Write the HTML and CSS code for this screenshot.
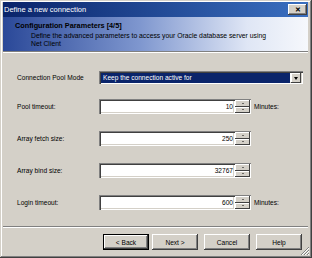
FILE: index.html
```html
<!DOCTYPE html>
<html lang="en">
<head>
  <meta charset="UTF-8">
  <title>Define a new connection</title>
  <link rel="stylesheet" href="styles.css">
</head>
<body>
  <div class="window">
    <div class="titlebar">
      <span class="title">Define a new connection</span>
      <span class="close">&#x2715;</span>
    </div>

    <div class="banner">
      <div class="banner-title">Configuration Parameters [4/5]</div>
      <div class="banner-desc">Define the advanced parameters to access your Oracle database server using<br>Net Client</div>
    </div>

    <div class="form">
      <div class="row row-mode">
        <label>Connection Pool Mode</label>
        <div class="combo">
          <span class="combo-value">Keep the connection active for</span>
          <span class="combo-btn"><span class="arrow-down"></span></span>
        </div>
      </div>

      <div class="row">
        <label>Pool timeout:</label>
        <div class="field">10</div>
        <div class="spinner"><span class="spin"><span class="arrow-up"></span></span><span class="spin"><span class="arrow-down small"></span></span></div>
        <span class="unit">Minutes:</span>
      </div>

      <div class="row">
        <label>Array fetch size:</label>
        <div class="field">250</div>
        <div class="spinner"><span class="spin"><span class="arrow-up"></span></span><span class="spin"><span class="arrow-down small"></span></span></div>
      </div>

      <div class="row">
        <label>Array bind size:</label>
        <div class="field">32767</div>
        <div class="spinner"><span class="spin"><span class="arrow-up"></span></span><span class="spin"><span class="arrow-down small"></span></span></div>
      </div>

      <div class="row">
        <label>Login timeout:</label>
        <div class="field">600</div>
        <div class="spinner"><span class="spin"><span class="arrow-up"></span></span><span class="spin"><span class="arrow-down small"></span></span></div>
        <span class="unit">Minutes:</span>
      </div>
    </div>

    <div class="footer">
      <button class="btn default">&lt; Back</button>
      <button class="btn next">Next &gt;</button>
      <button class="btn spaced">Cancel</button>
      <button class="btn spaced">Help</button>
    </div>

    <svg class="grip" width="10" height="10" viewBox="0 0 10 10">
      <path d="M9 1 L1 9 M9 4 L4 9 M9 7 L7 9" stroke="#808080" stroke-width="1"/>
      <path d="M9 2 L2 9 M9 5 L5 9 M9 8 L8 9" stroke="#ffffff" stroke-width="1"/>
    </svg>
  </div>
</body>
</html>
```

FILE: styles.css
```css
body {
  margin: 0;
  font-family: "Liberation Sans", Arial, sans-serif;
  font-size: 6.6px;
  color: #000;
  background: #d4d0c8;
}
.window {
  position: relative;
  width: 312px;
  height: 258px;
  box-sizing: border-box;
  padding: 2px 4px 2px 3px;
  background: #d4d0c8;
  box-shadow: inset -1px -1px #404040, inset 1px 1px #d4d0c8, inset -2px -2px #808080, inset 2px 2px #ffffff;
  display: flex;
  flex-direction: column;
}
.titlebar {
  height: 15px;
  display: flex;
  align-items: center;
  justify-content: space-between;
  background: linear-gradient(to right, #0a246a, #3a6fc0);
  color: #fff;
  padding-left: 1px;
  padding-right: 1px;
}
.title {
  font-size: 7.5px;
}
.close {
  width: 19px;
  height: 11px;
  background: #d4d0c8;
  color: #000;
  font-size: 7px;
  font-weight: bold;
  display: flex;
  align-items: center;
  justify-content: center;
  box-sizing: border-box;
  box-shadow: inset -1px -1px #404040, inset 1px 1px #ffffff, inset -2px -2px #808080;
}
.banner {
  height: 34px;
  border-bottom: 1px solid #808080;
  background: linear-gradient(to right, #2a4898 0%, #7f97cf 45%, #dfe6f5 80%, #f6f8fc 100%);
  padding: 4px 0 0 12px;
  box-sizing: border-box;
  height: 35px;
}
.banner-title {
  font-size: 7.3px;
  font-weight: bold;
  line-height: 10px;
}
.banner-desc {
  font-size: 6.8px;
  line-height: 7.6px;
  padding-left: 16px;
  margin-top: 1px;
}
.form {
  border-top: 1px solid #ffffff;
  padding: 18px 0 0 14px;
  height: 174px;
  box-sizing: border-box;
}
.row {
  display: flex;
  align-items: center;
  height: 15px;
  margin-bottom: 17px;
}
.row-mode {
  height: 13px;
  margin-bottom: 15px;
}
.row label {
  width: 82px;
  flex: none;
}
.combo {
  width: 204px;
  height: 13px;
  box-sizing: border-box;
  background: #fff;
  padding: 2px 2px 1px 2px;
  display: flex;
  box-shadow: inset 1px 1px #808080, inset 2px 2px #404040, inset -1px -1px #ffffff, inset -2px -2px #d4d0c8;
}
.combo-value {
  flex: 1;
  background: #0a246a;
  color: #fff;
  padding-left: 2px;
  line-height: 10px;
  margin-right: 1px;
}
.combo-btn {
  width: 10px;
  background: #d4d0c8;
  box-shadow: inset -1px -1px #404040, inset 1px 1px #ffffff;
  display: flex;
  align-items: center;
  justify-content: center;
}
.arrow-down {
  width: 0;
  height: 0;
  border-left: 2.5px solid transparent;
  border-right: 2.5px solid transparent;
  border-top: 3px solid #000;
}
.arrow-up {
  width: 0;
  height: 0;
  border-left: 1.5px solid transparent;
  border-right: 1.5px solid transparent;
  border-bottom: 1.5px solid #000;
}
.arrow-down.small {
  border-left-width: 1.5px;
  border-right-width: 1.5px;
  border-top-width: 1.5px;
}
.field {
  width: 136px;
  height: 15px;
  box-sizing: border-box;
  background: #fff;
  text-align: right;
  padding-right: 2px;
  line-height: 15px;
  box-shadow: inset 1px 1px #808080, inset 2px 2px #404040, inset -1px -1px #ffffff, inset -2px -2px #d4d0c8;
}
.spinner {
  width: 16px;
  height: 15px;
  display: flex;
  flex-direction: column;
  box-sizing: border-box;
  padding: 1px 1px 1px 0;
  background: #fff;
  box-shadow: inset 0 1px #808080, inset -1px -1px #ffffff;
}
.spin {
  flex: 1;
  background: #d4d0c8;
  box-shadow: inset -1px -1px #404040, inset 1px 1px #ffffff;
  display: flex;
  align-items: center;
  justify-content: center;
}
.unit {
  margin-left: 3px;
}
.footer {
  border-top: 1px solid #808080;
  box-shadow: inset 0 1px #ffffff;
  padding: 7px 6px 0 0;
  display: flex;
  justify-content: flex-end;
}
.btn {
  width: 46px;
  height: 16px;
  border: none;
  padding: 0;
  font-family: inherit;
  font-size: 6.6px;
  background: #d4d0c8;
  color: #000;
  box-shadow: inset -1px -1px #404040, inset 1px 1px #ffffff, inset -2px -2px #808080;
}
.btn.default {
  box-shadow: inset 0 0 0 1px #000, inset -2px -2px #404040, inset 2px 2px #ffffff, inset -3px -3px #808080;
}
.btn.next {
  margin-left: 3px;
}
.btn.spaced {
  margin-left: 6px;
}
.grip {
  position: absolute;
  right: 2px;
  bottom: 2px;
}
```
